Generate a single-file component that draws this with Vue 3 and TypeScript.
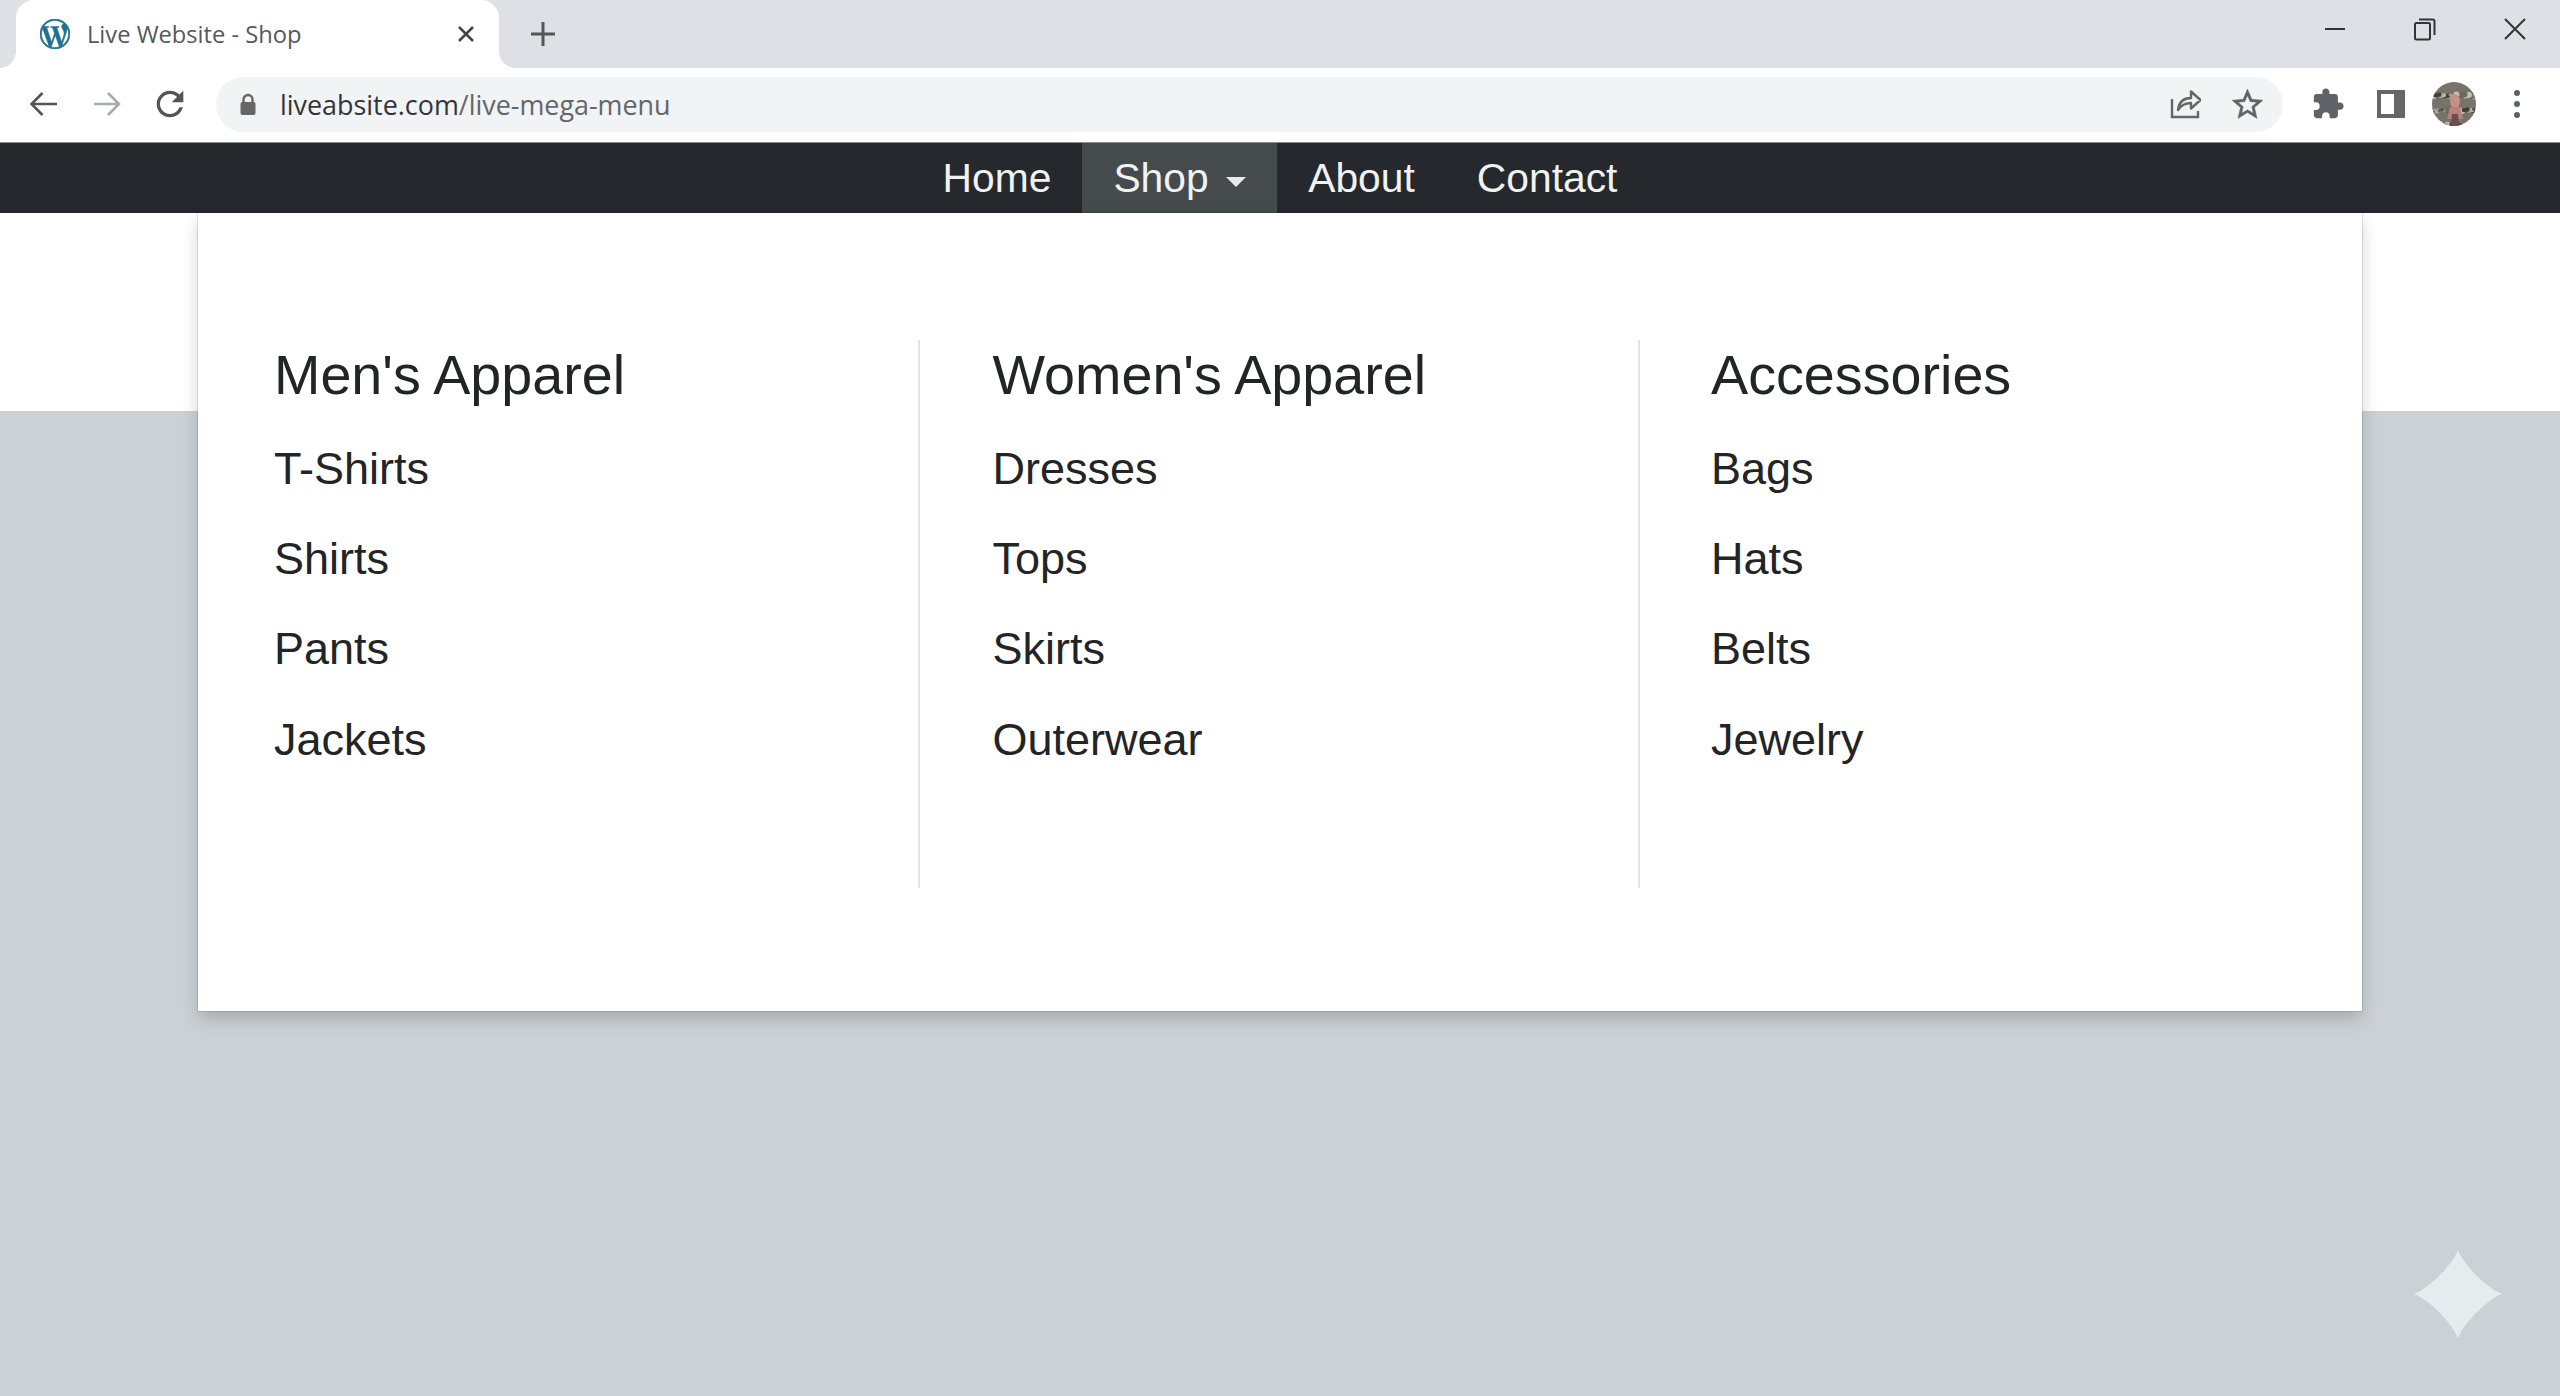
<script setup lang="ts">
interface MenuColumn { title: string; items: string[] }
const columns: MenuColumn[] = [
  { title: "Men's Apparel", items: ['T-Shirts', 'Shirts', 'Pants', 'Jackets'] },
  { title: "Women's Apparel", items: ['Dresses', 'Tops', 'Skirts', 'Outerwear'] },
  { title: 'Accessories', items: ['Bags', 'Hats', 'Belts', 'Jewelry'] },
]
const navItems = ['Home', 'Shop', 'About', 'Contact']
const tones = ['#4f4d47', '#b5b3a6', '#6b685f', '#98968a', '#3f3e3a', '#c4c2b6']
const specks = Array.from({ length: 70 }, (_, i) => ({
  x: (i * 17.3) % 44,
  y: (i * 11.7 + (i % 5) * 3) % 44,
  r: 1.6 + (i % 3) * 0.7,
  fill: tones[(i * 7) % tones.length],
}))
</script>

<template>
  <div class="page">
    <header class="strip">
      <div class="tab">
        <svg class="favicon" viewBox="0 0 24 24">
          <circle cx="12" cy="12" r="11.5" fill="#fff" />
          <path fill="#22708f" stroke="#22708f" stroke-width="0.500" d="M21.469 6.825c.84 1.537 1.318 3.3 1.318 5.175 0 3.979-2.156 7.456-5.363 9.325l3.295-9.527c.615-1.54.82-2.771.82-3.864 0-.405-.026-.78-.07-1.11m-7.981.105c.647-.03 1.232-.105 1.232-.105.582-.075.514-.93-.067-.899 0 0-1.755.135-2.88.135-1.064 0-2.85-.15-2.85-.15-.585-.03-.661.855-.075.885 0 0 .54.061 1.125.09l1.68 4.605-2.37 7.08L5.354 6.9c.649-.03 1.234-.1 1.234-.1.585-.075.516-.93-.065-.896 0 0-1.746.138-2.874.138-.2 0-.438-.008-.69-.015C4.911 3.15 8.235 1.215 12 1.215c2.809 0 5.365 1.072 7.286 2.833-.046-.003-.091-.009-.141-.009-1.06 0-1.812.923-1.812 1.914 0 .89.513 1.643 1.06 2.531.411.72.89 1.643.89 2.977 0 .915-.354 1.994-.821 3.479l-1.075 3.585-3.9-11.61.001.014zM12 22.784c-1.059 0-2.081-.153-3.048-.437l3.237-9.406 3.315 9.087c.024.053.05.101.078.149-1.12.393-2.325.609-3.582.609M1.211 12c0-1.564.336-3.05.935-4.39L7.29 21.709C3.694 19.96 1.212 16.271 1.211 12M12 0C5.385 0 0 5.385 0 12s5.385 12 12 12 12-5.385 12-12S18.615 0 12 0" />
        </svg>
        <span class="tab-title">Live Website - Shop</span>
        <svg class="tab-close" viewBox="0 0 18 18"><path d="M2 2l14 14M16 2L2 16" /></svg>
      </div>
      <svg class="new-tab" viewBox="0 0 24 24"><path d="M12 0v24M0 12h24" /></svg>
      <div class="spacer"></div>
      <div class="win-btn"><svg width="20" height="4" viewBox="0 0 20 4"><path d="M0 2h20" /></svg></div>
      <div class="win-btn"><svg width="24" height="24" viewBox="0 0 24 24"><path d="M6 2.500h13.500a2 2 0 0 1 2 2V18M2 7.500a1.500 1.500 0 0 1 1.500-1.500h12a1.500 1.500 0 0 1 1.500 1.500V21a1.500 1.500 0 0 1-1.500 1.500h-12A1.500 1.500 0 0 1 2 21z" /></svg></div>
      <div class="win-btn"><svg width="24" height="24" viewBox="0 0 24 24"><path d="M2 2l20 20M22 2L2 22" /></svg></div>
    </header>

    <div class="toolbar">
      <div class="tool">
        <svg class="stroke-icon" width="28" height="26" viewBox="0 0 28 26"><path d="M27 13H1M12.500 2L1.500 13l11 11" /></svg>
      </div>
      <div class="tool">
        <svg class="stroke-icon light" width="28" height="26" viewBox="0 0 28 26"><path d="M1 13h25M15 2l11 11-11 11" /></svg>
      </div>
      <div class="tool">
        <svg width="40" height="40" viewBox="0 0 24 24"><path fill="#555" d="M17.650 6.350C16.200 4.900 14.210 4 12 4c-4.420 0-7.990 3.580-7.990 8s3.570 8 7.990 8c3.730 0 6.840-2.550 7.730-6h-2.080c-.82 2.330-3.040 4-5.650 4-3.310 0-6-2.690-6-6s2.690-6 6-6c1.660 0 3.140.69 4.220 1.780L13 11h7V4l-2.350 2.350z" /></svg>
      </div>
      <div class="omnibox">
        <svg class="lock" width="18" height="22" viewBox="0 0 18 22">
          <path d="M4.500 10V6.500a4.500 4.500 0 0 1 9 0V10" fill="none" stroke="#666" stroke-width="2.400" />
          <rect x="1.500" y="9" width="15" height="13" rx="2" fill="#666" />
        </svg>
        <span class="url"><span class="host">liveabsite.com</span>/live-mega-menu</span>
        <div class="tool">
          <svg width="32" height="32" viewBox="-1 1 32 32" fill="none" stroke="#666" stroke-width="2.400"><path d="M2 12v18h26v-6" /><path d="M8 23c1-8 6-12 13-12V4.500L30.500 13 21 21.500V16c-5 0-9.500 1.500-13 7z" stroke-linejoin="round" /></svg>
        </div>
        <div class="tool">
          <svg width="37" height="37" viewBox="0 0 24 24"><path fill="#5f6368" stroke="#5f6368" stroke-width="0.300" d="M22 9.240l-7.190-.62L12 2 9.190 8.630 2 9.240l5.460 4.730L5.820 21 12 17.270 18.180 21l-1.630-7.030L22 9.240zM12 15.400l-3.760 2.270 1-4.280-3.320-2.880 4.380-.38L12 6.100l1.710 4.040 4.380.38-3.320 2.880 1 4.280L12 15.400z" /></svg>
        </div>
      </div>
      <div class="tool ext">
        <svg width="34" height="34" viewBox="0 0 24 24"><path fill="#5f6368" d="M20.500 11H19V7c0-1.100-.9-2-2-2h-4V3.500C13 2.120 11.880 1 10.500 1S8 2.120 8 3.500V5H4c-1.100 0-1.990.9-1.990 2v3.800H3.500c1.490 0 2.700 1.210 2.700 2.700s-1.210 2.700-2.700 2.700H2V20c0 1.100.9 2 2 2h3.800v-1.500c0-1.490 1.210-2.700 2.700-2.700 1.490 0 2.700 1.210 2.700 2.700V22H17c1.100 0 2-.9 2-2v-4h1.500c1.380 0 2.500-1.120 2.500-2.500S21.880 11 20.500 11z" /></svg>
      </div>
      <div class="tool">
        <svg width="28" height="28" viewBox="0 0 28 28"><path fill="#666" fill-rule="evenodd" d="M0 0h28v28H0zM4 4v20h13V4z" /></svg>
      </div>
      <div class="tool">
        <svg width="44" height="44" viewBox="0 0 44 44">
          <defs><clipPath id="avatar-clip"><circle cx="22" cy="22" r="22" /></clipPath></defs>
          <g clip-path="url(#avatar-clip)">
            <rect width="44" height="44" fill="#78736a" />
            <circle v-for="(s, i) in specks" :key="i" :cx="s.x" :cy="s.y" :r="s.r" :fill="s.fill" />
            <ellipse cx="23" cy="19" rx="5" ry="7" fill="#c88f88" />
            <path d="M18 25h10l3 12H15z" fill="#bd7f7c" />
            <path d="M20 32l6 0 1 12h-8z" fill="#6a4f4c" />
          </g>
        </svg>
      </div>
      <div class="tool dots"><i></i><i></i><i></i></div>
    </div>

    <nav class="navbar">
      <a v-for="item in navItems" :key="item" class="nav-link" :class="{ active: item === 'Shop' }">
        {{ item }}<span v-if="item === 'Shop'" class="caret"></span>
      </a>
      <section class="mega">
        <div v-for="col in columns" :key="col.title" class="mega-col">
          <h3>{{ col.title }}</h3>
          <a v-for="entry in col.items" :key="entry" class="mega-item">{{ entry }}</a>
        </div>
      </section>
    </nav>

    <div class="band"></div>

    <svg class="sparkle" width="88" height="88" viewBox="0 0 88 88">
      <path d="M44 0C50 15.300 72.700 38 88 44 72.700 50 50 72.700 44 88 38 72.700 15.300 50 0 44 15.300 38 38 15.300 44 0z" />
    </svg>
  </div>
</template>

<style scoped>
.page {
  position: relative;
  height: 1396px;
  overflow: hidden;
  display: flex;
  flex-direction: column;
  background: #cbd1d4;
  font-family: "Liberation Sans", Arial, sans-serif;
}
.strip {
  height: 68px;
  display: flex;
  align-items: flex-start;
  padding-left: 16px;
  background: #dee0e5;
  flex: none;
}
.tab {
  position: relative;
  width: 483px;
  height: 68px;
  box-sizing: border-box;
  display: flex;
  align-items: center;
  padding: 0 16px 0 24px;
  background: #fff;
  border-radius: 18px 18px 0 0;
}
.tab::before,
.tab::after {
  content: "";
  position: absolute;
  bottom: 0;
  width: 16px;
  height: 16px;
}
.tab::before {
  left: -16px;
  background: radial-gradient(circle at 0 0, transparent 15.500px, #fff 16px);
}
.tab::after {
  right: -16px;
  background: radial-gradient(circle at 100% 0, transparent 15.500px, #fff 16px);
}
.favicon {
  width: 30px;
  height: 30px;
  flex: none;
}
.tab-title {
  flex: 1;
  margin-left: 17px;
  font: 23.700px "Open Sans", sans-serif;
  color: #55585c;
  white-space: nowrap;
}
.tab-close {
  width: 18px;
  height: 18px;
  margin-right: 8px;
  flex: none;
  fill: none;
  stroke: #444;
  stroke-width: 2.500;
}
.new-tab {
  width: 24px;
  height: 24px;
  margin: 22px 0 0 32px;
  flex: none;
  fill: none;
  stroke: #555;
  stroke-width: 3;
}
.spacer {
  flex: 1;
}
.win-btn {
  width: 90px;
  height: 58px;
  display: flex;
  align-items: center;
  justify-content: center;
  flex: none;
}
.win-btn svg {
  fill: none;
  stroke: #333;
  stroke-width: 2;
}
.toolbar {
  height: 74px;
  box-sizing: border-box;
  display: flex;
  align-items: center;
  padding: 0 0 2px 12px;
  background: #fff;
  flex: none;
}
.tool {
  width: 63px;
  height: 55px;
  display: flex;
  align-items: center;
  justify-content: center;
  flex: none;
}
.tool.ext {
  margin-left: 13px;
}
.stroke-icon {
  fill: none;
  stroke: #555;
  stroke-width: 2.600;
}
.stroke-icon.light {
  stroke: #a9abae;
}
.omnibox {
  width: 2067px;
  height: 55px;
  margin-left: 15px;
  box-sizing: border-box;
  display: flex;
  align-items: center;
  padding: 0 4px 0 23px;
  background: #f1f3f4;
  border-radius: 28px;
  flex: none;
}
.lock {
  flex: none;
}
.url {
  flex: 1;
  margin-left: 23px;
  font: 26.900px "Open Sans", sans-serif;
  color: #63666a;
  white-space: nowrap;
}
.host {
  color: #333538;
}
.dots {
  flex-direction: column;
  gap: 5px;
}
.dots i {
  width: 6px;
  height: 6px;
  border-radius: 50%;
  background: #5f6368;
}
.navbar {
  position: relative;
  height: 71px;
  display: flex;
  justify-content: center;
  background: #25282d;
  border-top: 1px solid #8a8c8f;
  box-sizing: border-box;
  flex: none;
}
.nav-link {
  padding: 0 31px;
  font-size: 40.800px;
  line-height: 70px;
  color: #f1f2f2;
  white-space: nowrap;
}
.nav-link.active {
  background: #454a4d;
}
.caret {
  display: inline-block;
  margin-left: 17.500px;
  vertical-align: 5px;
  border-top: 10px solid #e8e9ea;
  border-left: 10px solid transparent;
  border-right: 10px solid transparent;
}
.mega {
  position: absolute;
  top: 100%;
  left: 198px;
  z-index: 2;
  width: 2164px;
  height: 798px;
  box-sizing: border-box;
  display: grid;
  grid-template-columns: 722px 720px 1fr;
  padding-top: 127px;
  align-items: start;
  background: #fff;
  box-shadow: 0 0 0 1px rgba(0, 0, 0, 0.1), 0 8px 16px rgba(0, 0, 0, 0.18);
}
.mega-col {
  height: 548px;
  box-sizing: border-box;
  border-right: 2px solid #e3e4e6;
  color: #222426;
}
.mega-col:nth-child(1) {
  padding-left: 76px;
}
.mega-col:nth-child(2) {
  padding-left: 72.500px;
}
.mega-col:nth-child(3) {
  padding-left: 71px;
  border-right: 0;
}
.mega-col h3 {
  margin: 0 0 13.500px;
  font-size: 55.700px;
  font-weight: 400;
  line-height: 70px;
}
.mega-item {
  display: block;
  font-size: 45px;
  line-height: 90.400px;
}
.band {
  height: 198px;
  background: #fff;
  flex: none;
}
.sparkle {
  position: absolute;
  left: 2414px;
  top: 1250px;
  fill: #e6ebed;
}
</style>

<style>
html, body {
  margin: 0;
  background: #cbd1d4;
}
</style>
